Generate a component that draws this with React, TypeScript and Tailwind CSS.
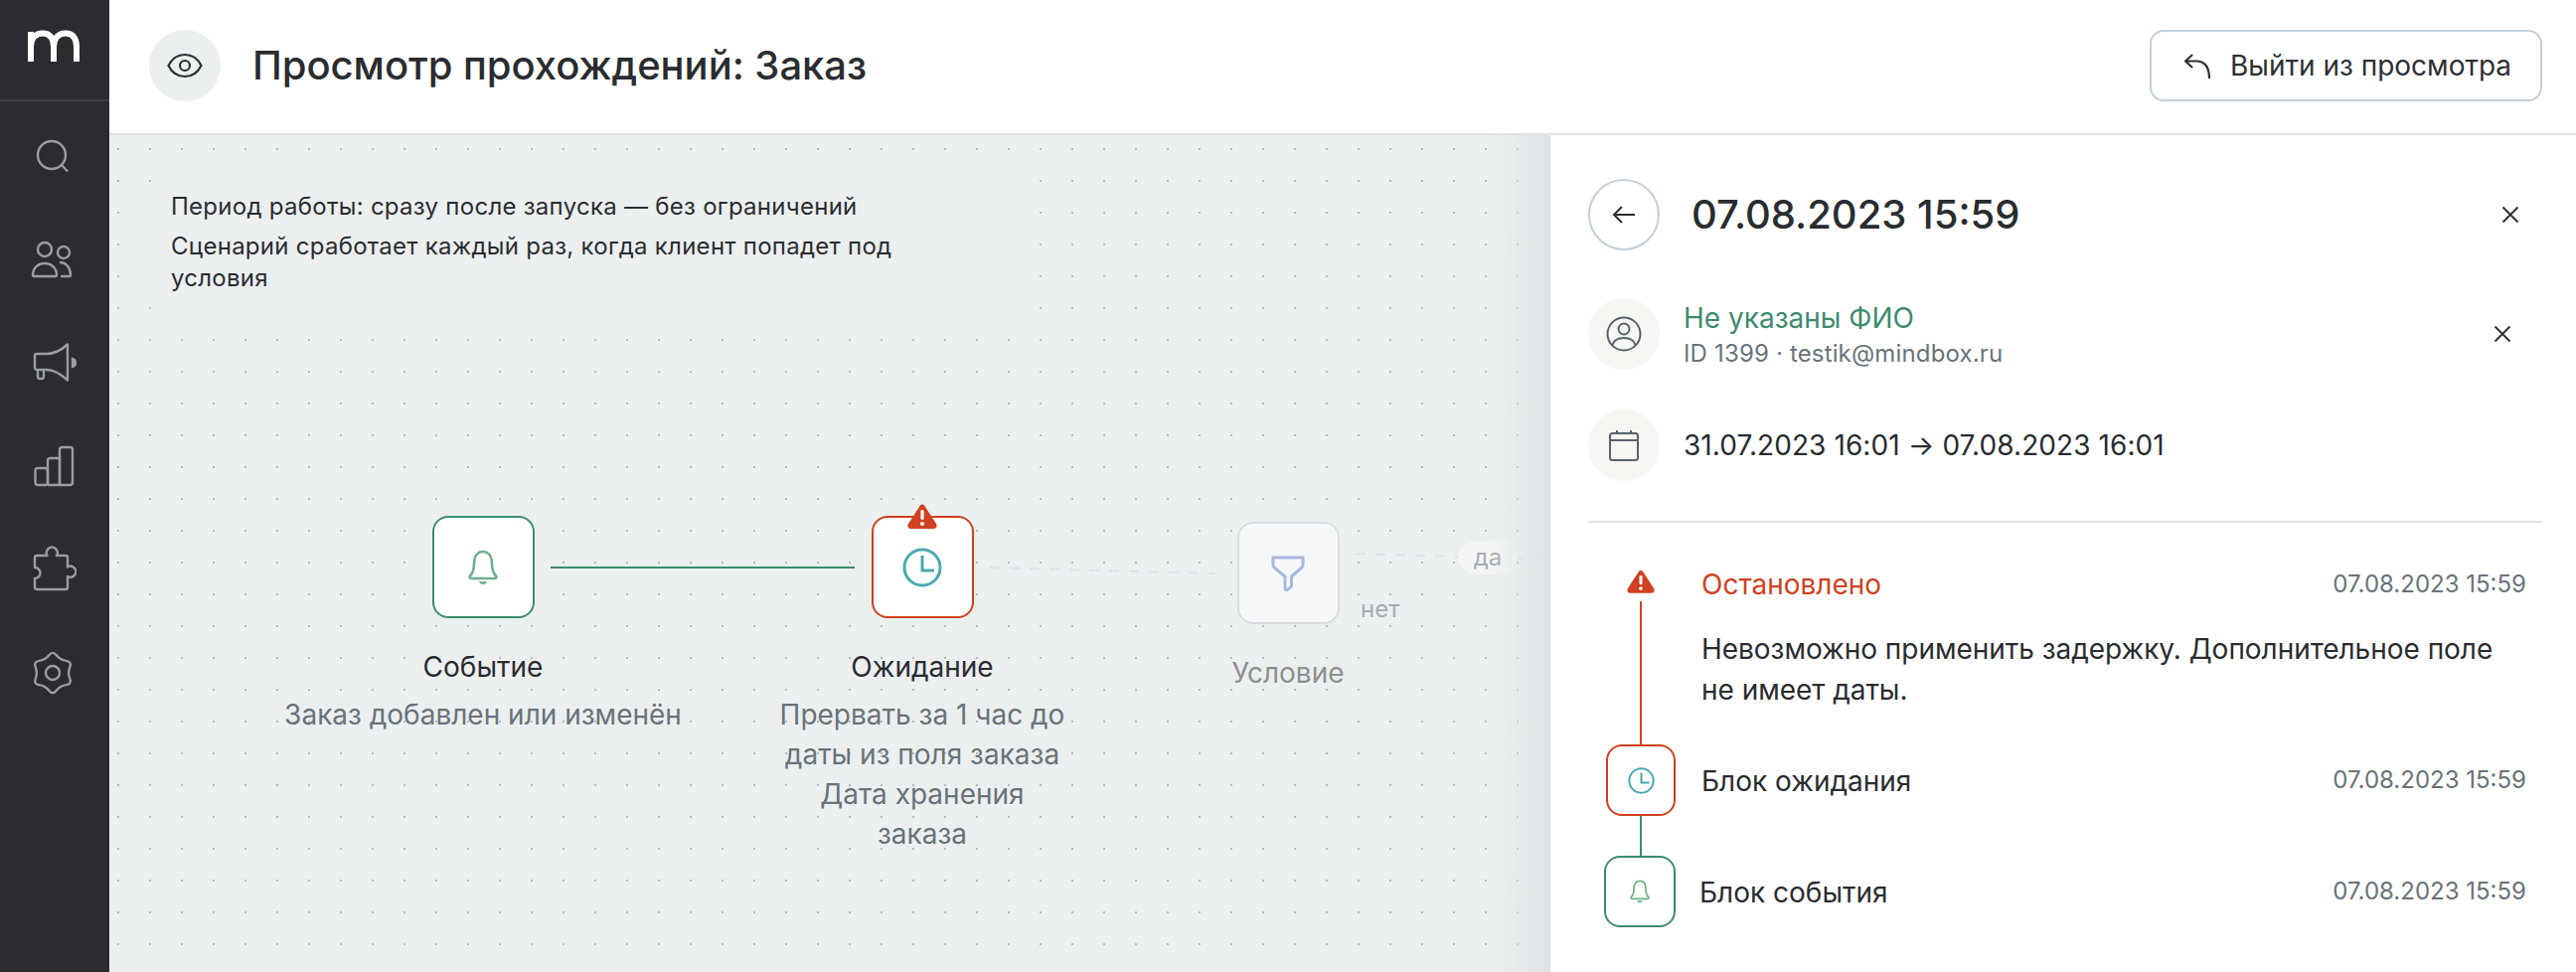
import React from "react";

const FONT = "font-['Inter','Noto_Sans',sans-serif]";

function Bell({ className }: { className?: string }) {
  return (
    <svg viewBox="0 0 32 36" fill="none" className={className}>
      <path d="M3 26.5C6 23.5 7 20.5 7 14C7 6 11 2 16 2C21 2 25 6 25 14C25 20.5 26 23.5 29 26.5C30 27.5 29.5 29 28 29H4C2.5 29 2 27.5 3 26.5Z" stroke="currentColor" strokeWidth="2.6" strokeLinejoin="round" />
      <path d="M12 32H20C19.5 36 12.5 36 12 32Z" fill="currentColor" />
    </svg>
  );
}

function Clock({ className, width = 3 }: { className?: string; width?: number }) {
  return (
    <svg viewBox="0 0 40 40" fill="none" className={className}>
      <circle cx="20" cy="20" r="18" stroke="currentColor" strokeWidth={width} />
      <path d="M20 8V23H32" stroke="currentColor" strokeWidth={width} />
    </svg>
  );
}

function Warn({ className }: { className?: string }) {
  return (
    <svg viewBox="0 0 30 25" className={className}>
      <path d="M13 1.5C14 0.2 16 0.2 17 1.5L29 20C30.5 22.5 29 25 26.5 25H3.5C1 25 -0.5 22.5 1 20Z" fill="currentColor" />
      <rect x="13.4" y="6" width="3.2" height="10" rx="1.4" fill="#fff" />
      <circle cx="15" cy="20" r="2" fill="#fff" />
    </svg>
  );
}

function XIcon({ className }: { className?: string }) {
  return (
    <svg viewBox="0 0 18 18" fill="none" className={className}>
      <path d="M1.5 1.5L16.5 16.5M16.5 1.5L1.5 16.5" stroke="currentColor" strokeWidth="1.9" />
    </svg>
  );
}

function gearPath() {
  const pts: [number, number][] = [];
  for (let i = 0; i < 12; i++) {
    const a = (i * Math.PI) / 6 - Math.PI / 2;
    const r = i % 2 === 0 ? 22.5 : 15;
    pts.push([24 + r * Math.cos(a), 24 + r * Math.sin(a)]);
  }
  const mid = (p: [number, number], q: [number, number]) => [(p[0] + q[0]) / 2, (p[1] + q[1]) / 2];
  const s = mid(pts[11], pts[0]);
  let d = `M${s[0].toFixed(2)} ${s[1].toFixed(2)}`;
  for (let i = 0; i < 12; i++) {
    const m = mid(pts[i], pts[(i + 1) % 12]);
    d += ` Q${pts[i][0].toFixed(2)} ${pts[i][1].toFixed(2)} ${m[0].toFixed(2)} ${m[1].toFixed(2)}`;
  }
  return d + "Z";
}

const navIcons = [
  <>
    <circle cx="23" cy="23" r="14" />
    <path d="M33 33L39 39.5" />
  </>,
  <>
    <circle cx="16" cy="14" r="7" />
    <path d="M5 41C4.4 41 4 40.6 4 40C4 33 9 28 16 28C23 28 28 33 28 40C28 40.6 27.6 41 27 41Z" />
    <circle cx="35" cy="17" r="6" />
    <path d="M31 27C38 27 42 33 42 40C42 40.6 41.6 41 41 41H32" />
  </>,
  <>
    <path d="M8 15H18C27 15 34 10 39 5.5V41.5C34 37 27 31 18 31H8C6.9 31 6 30.1 6 29V17C6 15.9 6.9 15 8 15Z" strokeLinejoin="round" />
    <path d="M9 31V38C9 39.1 9.9 40 11 40H13C14.1 40 15 39.1 15 38V31" />
    <path d="M44 20C48 21 48 27 44 28Z" fill="#9a9da0" />
  </>,
  <>
    <rect x="6.5" y="26" width="12.5" height="17" rx="2.5" />
    <path d="M19 43V18.5C19 17.1 20.1 16 21.5 16H31V43" />
    <path d="M19 43H41.5C42.9 43 44 41.9 44 40.5V7.5C44 6.1 42.9 5 41.5 5H33.5C32.1 5 31 6.1 31 7.5V43" />
  </>,
  <>
    <path d="M6 12C6 10.9 6.9 10 8 10H18.5A5.5 5.5 0 1 1 28 10H37C38.1 10 39 10.9 39 12V21.5A5.5 5.5 0 1 1 39 31V42C39 43.1 38.1 44 37 44H8C6.9 44 6 43.1 6 42V33A5.5 5.5 0 1 0 6 22Z" strokeLinejoin="round" />
  </>,
  <>
    <path d={gearPath()} />
    <circle cx="24" cy="24" r="7" />
  </>,
];

function Sidebar() {
  return (
    <aside className="flex w-[110px] shrink-0 flex-col bg-[#2a2c31]">
      <div className="flex h-[102px] items-start border-b-2 border-[#3c3f44]">
        <svg viewBox="0 0 110 100" fill="none" className="h-[100px] w-[110px]">
          <path d="M31 62V32M31 47C31 38 36 33.5 43 33.5C50 33.5 54 38 54 47V62M54 47C54 38 59 33.5 66 33.5C73 33.5 77 38 77 47V62" stroke="#fff" strokeWidth="6" />
        </svg>
      </div>
      <nav className="flex flex-col items-center pt-[3px] pr-1">
        {navIcons.map((icon, i) => (
          <div key={i} className="flex h-[104px] w-full items-center justify-center">
            <svg viewBox="0 0 48 48" fill="none" stroke="#9a9da0" strokeWidth="2.4" className="h-12 w-12">
              {icon}
            </svg>
          </div>
        ))}
      </nav>
    </aside>
  );
}

function Header() {
  return (
    <header className="flex h-[136px] shrink-0 items-start justify-between border-b-2 border-[#e0e5e7] bg-white pt-[30px] pr-[34px] pl-10">
      <div className="flex items-center gap-8">
        <div className="flex h-[72px] w-[72px] items-center justify-center rounded-full bg-[#ebeff0]">
          <svg viewBox="0 0 36 26" fill="none" className="h-[26px] w-9 text-[#2e3034]">
            <path d="M1.5 13C5 6 11 2 18 2C25 2 31 6 34.5 13C31 20 25 24 18 24C11 24 5 20 1.5 13Z" stroke="currentColor" strokeWidth="2.2" />
            <circle cx="18" cy="13" r="5" stroke="currentColor" strokeWidth="2.2" />
          </svg>
        </div>
        <h1 className="text-[40px] leading-[48px] font-medium tracking-[-0.04px] text-[#2a2c30]">Просмотр прохождений: Заказ</h1>
      </div>
      <button className="flex h-[72px] w-[395px] items-center gap-5 rounded-[14px] border-2 border-[#c3cfd8] pl-[33px] text-[28px] text-[#2e3034]">
        <svg viewBox="0 0 26 25" fill="none" className="h-[25px] w-[26px]">
          <path d="M8 1L1 7.5L8 14M1 7.5H12C20 7.5 25 13 25 25" stroke="currentColor" strokeWidth="2.2" />
        </svg>
        Выйти из просмотра
      </button>
    </header>
  );
}

function Node({ left, top, w, title, lines, children, box, titleClass }: {
  left: string; top: string; w: string; title: string; lines?: string[]; children: React.ReactNode; box: string; titleClass?: string;
}) {
  return (
    <div className={`absolute flex flex-col items-center ${left} ${top} ${w}`}>
      <div className={`flex h-[103px] w-[103px] items-center justify-center rounded-[16px] border-2 ${box}`}>{children}</div>
      <div className={`mt-[29px] text-[28px] leading-[40px] ${titleClass ?? "text-[#2a2c30]"}`}>{title}</div>
      {lines && (
        <div className="mt-2 text-center text-[28px] leading-[40px] text-[#68737a]">
          {lines.map((l) => (
            <div key={l} className="whitespace-nowrap">{l}</div>
          ))}
        </div>
      )}
    </div>
  );
}

function Canvas() {
  return (
    <section className="relative min-w-0 flex-1 overflow-hidden bg-[#ebeff0] bg-[radial-gradient(circle,#b4babd_0.9px,transparent_1.2px)] bg-[length:32px_32px] bg-[position:-7px_-2px]">
      <div className="absolute top-[64px] left-[32px] h-[100px] w-[40px] bg-[#ebeff0]" />
      <div className="absolute top-[34px] left-[50px] h-[160px] w-[870px] bg-[#ebeff0] pt-[22px] pl-3 text-[24px] leading-[32px] tracking-[0.27px] text-[#2a2c30]">
        <p>Период работы: сразу после запуска — без ограничений</p>
        <p className="mt-2 w-[760px]">Сценарий сработает каждый раз, когда клиент попадет под условия</p>
      </div>

      <svg className="absolute inset-0 h-full w-full" fill="none">
        <path d="M444 435H750" stroke="#3d8c6c" strokeWidth="2" />
        <path d="M886 435L1113 441" stroke="#dce0e8" strokeWidth="2" strokeDasharray="10 10" />
        <path d="M1254 421L1440 427" stroke="#dce0e8" strokeWidth="2" strokeDasharray="10 10" />
      </svg>

      <Node left="left-[226px]" top="top-[383px]" w="w-[300px]" title="Событие" lines={["Заказ добавлен или изменён"]} box="border-[#3d8c6c] bg-white">
        <Bell className="h-9 w-8 text-[#6fb18a]" />
      </Node>
      <Node left="left-[668px]" top="top-[383px]" w="w-[300px]" title="Ожидание" lines={["Прервать за 1 час до", "даты из поля заказа", "Дата хранения", "заказа"]} box="border-[#cf4120] bg-white">
        <Clock className="h-10 w-10 text-[#4aa9b0]" />
      </Node>
      <div className="absolute top-[371px] left-[803px] text-[#cf4120]">
        <Warn className="h-[25px] w-[30px]" />
      </div>
      <Node left="left-[1036px]" top="top-[389px]" w="w-[300px]" title="Условие" titleClass="text-[#8d9092]" box="border-[#d8dde2] bg-[#f6f7f9]">
        <svg viewBox="0 0 36 36" fill="none" className="h-9 w-9 text-[#a7b8e0]">
          <path d="M3 2H33V9.5Q33 11 32 12L21.5 21V30Q21.5 31 20.5 32L17 34.5Q15 35 15 33V21L4 12Q3 11 3 9.5Z" stroke="currentColor" strokeWidth="3" strokeLinejoin="round" />
        </svg>
      </Node>
      <div className="absolute top-[462px] left-[1259px] text-[24px] leading-[30px] text-[#a6adb2]">нет</div>
      <div className="absolute top-[408px] left-[1357px] flex h-[34px] w-[60px] items-center justify-center rounded-full bg-[#f3f5f6] text-[24px] text-[#a6adb2]">да</div>
      <div className="absolute inset-y-0 right-0 w-[60px] bg-gradient-to-r from-transparent to-[#dfe3e5]" />
    </section>
  );
}

function Row({ children, className }: { children: React.ReactNode; className?: string }) {
  return <div className={`flex items-center ${className ?? ""}`}>{children}</div>;
}

function Stamp() {
  return <span className="ml-auto text-[24px] leading-[30px] text-[#68737a]">07.08.2023 15:59</span>;
}

function Panel() {
  return (
    <aside className="flex w-[1032px] shrink-0 flex-col bg-white pt-[44px] pr-[34px] pl-[38px]">
      <Row className="h-[72px]">
        <div className="flex h-[72px] w-[72px] items-center justify-center rounded-full border-2 border-[#c3cfd8]">
          <svg viewBox="0 0 24 20" fill="none" className="h-5 w-6 text-[#2e3034]">
            <path d="M10 2L2 10L10 18M2 10H23" stroke="currentColor" strokeWidth="2" />
          </svg>
        </div>
        <h2 className="ml-8 text-[40px] leading-[48px] font-medium text-[#2a2c30]">07.08.2023 15:59</h2>
        <XIcon className="mr-[23px] ml-auto h-[18px] w-[18px] text-[#2e3034]" />
      </Row>
      <Row className="mt-12 h-[72px]">
        <div className="flex h-[72px] w-[72px] items-center justify-center rounded-full bg-[#f6f6f2]">
          <svg viewBox="0 0 36 36" fill="none" className="h-9 w-9 text-[#59636b]">
            <circle cx="18" cy="18" r="16.5" stroke="currentColor" strokeWidth="2" />
            <circle cx="18" cy="13" r="5.5" stroke="currentColor" strokeWidth="2" />
            <path d="M6.5 29C8 24 12 22 18 22C24 22 28 24 29.5 29" stroke="currentColor" strokeWidth="2" />
          </svg>
        </div>
        <div className="ml-6 pt-1">
          <div className="text-[28px] leading-[36px] text-[#3d8c6c]">Не указаны ФИО</div>
          <div className="text-[24px] leading-[36px] tracking-[0.16px] text-[#68737a]">ID 1399 · testik@mindbox.ru</div>
        </div>
        <XIcon className="mr-[31px] ml-auto h-[18px] w-[18px] text-[#2e3034]" />
      </Row>
      <Row className="mt-10 h-[72px]">
        <div className="flex h-[72px] w-[72px] items-center justify-center rounded-full bg-[#f6f6f2]">
          <svg viewBox="0 0 32 32" fill="none" className="h-8 w-8 text-[#59636b]">
            <rect x="2" y="4" width="28" height="27" rx="2.5" stroke="currentColor" strokeWidth="2" />
            <path d="M2 11H30M9 1V4M23 1V4" stroke="currentColor" strokeWidth="2" />
          </svg>
        </div>
        <div className="ml-6 text-[28px] leading-[36px] tracking-[0.08px] text-[#2a2c30]">31.07.2023 16:01 → 07.08.2023 16:01</div>
      </Row>
      <div className="mt-10 h-0.5 bg-[#dfe4e6]" />

      <div className="mt-[47px] flex h-[176px] pr-4">
        <div className="flex w-[106px] shrink-0 flex-col items-center">
          <Warn className="h-6 w-7 shrink-0 text-[#cf4120]" />
          <div className="mt-2 w-0.5 flex-1 bg-[#cf4120]" />
        </div>
        <div className="ml-2 flex-1">
          <Row>
            <span className="text-[28px] leading-[26px] text-[#cf4120]">Остановлено</span>
            <Stamp />
          </Row>
          <p className="mt-[30px] pr-px text-[28px] leading-[41px] tracking-[-0.03px] text-[#2a2c30]">Невозможно применить задержку. Дополнительное поле не имеет даты.</p>
        </div>
      </div>

      <Row className="pr-4">
        <div className="ml-[18px] flex h-[72px] w-[70px] items-center justify-center rounded-[16px] border-2 border-[#cf4120]">
          <Clock className="h-[27px] w-[27px] text-[#4aa9b0]" width={3} />
        </div>
        <span className="ml-[26px] pt-0.5 text-[28px] leading-[36px] text-[#2a2c30]">Блок ожидания</span>
        <Stamp />
      </Row>
      <div className="ml-[52px] h-10 w-0.5 bg-[#3d8c6c]" />
      <Row className="pr-4">
        <div className="ml-4 flex h-[72px] w-[72px] items-center justify-center rounded-[16px] border-2 border-[#3d8c6c]">
          <Bell className="h-6 w-[22px] text-[#6fb18a]" />
        </div>
        <span className="ml-6 pt-0.5 text-[28px] leading-[36px] text-[#2a2c30]">Блок события</span>
        <Stamp />
      </Row>
    </aside>
  );
}

export default function App() {
  return (
    <div className={`flex h-[978px] w-[2592px] overflow-hidden bg-white ${FONT}`}>
      <Sidebar />
      <main className="flex min-w-0 flex-1 flex-col">
        <Header />
        <div className="flex min-h-0 flex-1">
          <Canvas />
          <Panel />
        </div>
      </main>
    </div>
  );
}
